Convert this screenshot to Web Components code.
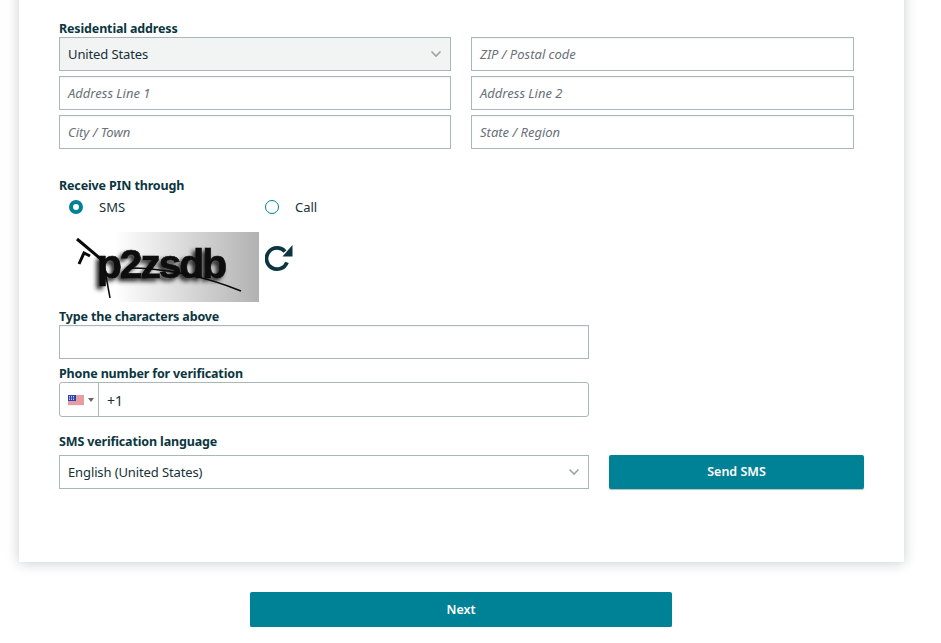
<!DOCTYPE html>
<html>
<head>
<meta charset="utf-8">
<title>Residential address</title>
<style>
html, body {
    background-color: #fff;
    color: #0b3640;
    font-family: 'Noto Sans', sans-serif;
    font-size: 13px;
    margin: 0;
    overflow: hidden;
}
</style>
</head>
<body>
<signup-page>
    <form-card>
        <address-section></address-section>
        <pin-section></pin-section>
    </form-card>
    <primary-button class="next">Next</primary-button>
</signup-page>

<script>
// Every box in the form has the same border and height
const boxStyles = `
:host {
    box-sizing: border-box;
    display: flex;
    height: 34px;
}

.box {
    align-items: center;
    border: solid 1px #aab7b8;
    box-shadow: inset 0 1px 1px rgba(0, 0, 0, .05);
    box-sizing: border-box;
    display: flex;
    height: 100%;
    padding: 0 8px;
    width: 100%;
}
`;

class FormField extends HTMLElement {
    constructor() {
        super();
        this.attachShadow({mode: 'open'});
        this.shadowRoot.innerHTML = `
        <style>
        ${boxStyles}
        .box {
            color: #687078;
            font-style: italic;
        }
        </style>
        <div class='box'><slot></slot></div>
        `;
    }
}
customElements.define('form-field', FormField);

class FormSelect extends HTMLElement {
    constructor() {
        super();
        this.attachShadow({mode: 'open'});
        this.shadowRoot.innerHTML = `
        <style>
        ${boxStyles}
        .box {
            color: #16313a;
            justify-content: space-between;
            letter-spacing: -.12px;
            box-shadow: none;
        }
        :host([filled]) .box {
            background-color: #f2f3f3;
        }
        svg {
            height: 8px;
            width: 12px;
        }
        </style>
        <div class='box'>
            <span><slot></slot></span>
            <svg viewBox='0 0 12 8'><path d='M1.5 1.5l4.5 4.5 4.5-4.5' fill='none' stroke='#98a5a6' stroke-width='1.6'/></svg>
        </div>
        `;
    }
}
customElements.define('form-select', FormSelect);

class FormLabel extends HTMLElement {
    constructor() {
        super();
        this.attachShadow({mode: 'open'});
        this.shadowRoot.innerHTML = `
        <style>
        :host {
            color: #0b3640;
            display: block;
            font-size: 12.5px;
            font-weight: 700;
            height: 15px;
            letter-spacing: -.15px;
            line-height: 16px;
            padding-top: 1px;
        }
        </style>
        <slot></slot>
        `;
    }
}
customElements.define('form-label', FormLabel);

class RadioOption extends HTMLElement {
    constructor() {
        super();
        this.attachShadow({mode: 'open'});
        this.shadowRoot.innerHTML = `
        <style>
        :host {
            align-items: center;
            color: #16313a;
            column-gap: 16px;
            display: flex;
            width: 196px;
        }
        .dot {
            border: solid 1px #008296;
            border-radius: 50%;
            box-sizing: border-box;
            height: 14px;
            width: 14px;
        }
        :host([checked]) .dot {
            border: solid 4px #008296;
        }
        </style>
        <span class='dot'></span>
        <slot></slot>
        `;
    }
}
customElements.define('radio-option', RadioOption);

class PrimaryButton extends HTMLElement {
    constructor() {
        super();
        this.attachShadow({mode: 'open'});
        this.shadowRoot.innerHTML = `
        <style>
        :host {
            align-items: center;
            background-color: #008296;
            border-radius: 2px;
            box-shadow: 0 1px 1px rgba(0, 28, 36, .3);
            box-sizing: border-box;
            color: #fff;
            display: flex;
            font-size: 12.5px;
            font-weight: 600;
            height: 34px;
            justify-content: center;
            padding-bottom: 1px;
        }
        </style>
        <slot></slot>
        `;
    }
}
customElements.define('primary-button', PrimaryButton);

class CaptchaImage extends HTMLElement {
    constructor() {
        super();
        this.attachShadow({mode: 'open'});
        this.shadowRoot.innerHTML = `
        <style>
        :host {
            column-gap: 6px;
            display: flex;
        }
        svg.picture {
            display: block;
            height: 70px;
            width: 200px;
        }
        svg.reload {
            height: 28px;
            margin-top: 12px;
            width: 30px;
        }
        text {
            font-family: 'Liberation Sans', sans-serif;
            font-size: 41px;
            font-weight: 700;
            letter-spacing: -2.2px;
        }
        </style>
        <svg class='picture' viewBox='0 0 200 70'>
            <defs>
                <linearGradient id='fade' x1='0' x2='1' y1='0' y2='0'>
                    <stop offset='0.28' stop-color='#fff'/>
                    <stop offset='0.55' stop-color='#e2e2e2'/>
                    <stop offset='1' stop-color='#b2b2b2'/>
                </linearGradient>
                <filter id='soft' x='-10%' y='-30%' width='120%' height='160%'>
                    <feDropShadow dx='-3' dy='3' stdDeviation='2.2' flood-color='#222'/>
                </filter>
            </defs>
            <rect width='200' height='70' fill='url(#fade)'/>
            <text x='38' y='46' fill='#0a0a0a' stroke='#0a0a0a' stroke-width='.6' filter='url(#soft)'>p2zsdb</text>
            <g fill='none' stroke='#0a0a0a'>
                <path d='M18 7L43 28' stroke-width='3'/>
                <path d='M20 32L25 21L31 24' stroke-width='3'/>
                <path d='M45 33L51 66' stroke-width='1.5'/>
                <path d='M68 36C110 36 145 44 182 59' stroke-width='1.5'/>
            </g>
        </svg>
        <svg class='reload' viewBox='0 0 30 28'>
            <path d='M20 7.5A10.6 10.6 0 1 0 22 18.3' fill='none' stroke='#0b3640' stroke-width='3.8'/>
            <path d='M27.5 1V12.5H17.5Z' fill='#0b3640'/>
        </svg>
        `;
    }
}
customElements.define('captcha-image', CaptchaImage);

class PhoneField extends HTMLElement {
    constructor() {
        super();
        this.attachShadow({mode: 'open'});
        this.shadowRoot.innerHTML = `
        <style>
        :host {
            border: solid 1px #aab7b8;
            border-radius: 3px;
            box-sizing: border-box;
            display: flex;
            height: 35px;
        }
        .country {
            align-items: center;
            border-right: solid 1px #aab7b8;
            box-sizing: border-box;
            column-gap: 4px;
            display: flex;
            padding-left: 8px;
            width: 39px;
        }
        .country svg {
            margin-top: 2px;
        }
        .caret {
            border-left: solid 3px transparent;
            border-right: solid 3px transparent;
            border-top: solid 4px #666;
            height: 0;
            width: 0;
        }
        .value {
            align-items: center;
            color: #16313a;
            display: flex;
            font-size: 14px;
            padding: 1px 0 0 8px;
        }
        </style>
        <div class='country'>
            <svg width='16' height='11' viewBox='0 0 16 11'>
                <rect width='16' height='11' fill='#f4f4f4'/>
                <path d='M0 1h16M0 3h16M0 5h16M0 7h16M0 9h16' stroke='#d8454f' stroke-width='1'/>
                <rect width='8' height='6' fill='#2f45b0'/>
                <path d='M1 1.5h6M1 3h6M1 4.5h6' stroke='#e6e9f8' stroke-width='.8' stroke-dasharray='1 1'/>
            </svg>
            <span class='caret'></span>
        </div>
        <div class='value'><slot></slot></div>
        `;
    }
}
customElements.define('phone-field', PhoneField);

class AddressSection extends HTMLElement {
    constructor() {
        super();
        this.attachShadow({mode: 'open'});
        this.shadowRoot.innerHTML = `
        <style>
        :host {
            display: block;
        }
        .grid {
            display: grid;
            gap: 5px 20px;
            grid-template-columns: 392px 383px;
            margin-top: 1px;
        }
        </style>
        <form-label>Residential address</form-label>
        <div class='grid'>
            <form-select filled>United States</form-select>
            <form-field>ZIP / Postal code</form-field>
            <form-field>Address Line 1</form-field>
            <form-field>Address Line 2</form-field>
            <form-field>City / Town</form-field>
            <form-field>State / Region</form-field>
        </div>
        `;
    }
}
customElements.define('address-section', AddressSection);

class PinSection extends HTMLElement {
    constructor() {
        super();
        this.attachShadow({mode: 'open'});
        this.shadowRoot.innerHTML = `
        <style>
        :host {
            display: block;
            margin-top: 28px;
        }
        .radios {
            display: flex;
            margin: 5px 0 0 10px;
        }
        captcha-image {
            margin-top: 16px;
        }
        .narrow {
            width: 530px;
        }
        .typed {
            margin-top: 6px;
        }
        .typed form-field {
            margin-top: 1px;
        }
        .phone {
            margin-top: 6px;
        }
        .phone phone-field {
            margin-top: 1px;
        }
        .language {
            margin-top: 16px;
        }
        .row {
            column-gap: 20px;
            display: flex;
            margin-top: 6px;
        }
        .row form-select {
            width: 530px;
        }
        .row primary-button {
            width: 255px;
        }
        </style>
        <form-label>Receive PIN through</form-label>
        <div class='radios'>
            <radio-option checked>SMS</radio-option>
            <radio-option>Call</radio-option>
        </div>
        <captcha-image></captcha-image>
        <div class='narrow typed'>
            <form-label>Type the characters above</form-label>
            <form-field></form-field>
        </div>
        <div class='narrow phone'>
            <form-label>Phone number for verification</form-label>
            <phone-field>+1</phone-field>
        </div>
        <form-label class='language'>SMS verification language</form-label>
        <div class='row'>
            <form-select>English (United States)</form-select>
            <primary-button>Send SMS</primary-button>
        </div>
        `;
    }
}
customElements.define('pin-section', PinSection);

class FormCard extends HTMLElement {
    constructor() {
        super();
        this.attachShadow({mode: 'open'});
        this.shadowRoot.innerHTML = `
        <style>
        :host {
            background-color: #fff;
            box-shadow: 0 1px 12px rgba(0, 28, 36, .22);
            box-sizing: border-box;
            display: block;
            height: 602px;
            margin: -40px 0 0 19px;
            padding: 60px 40px 0;
            width: 885px;
        }
        </style>
        <slot></slot>
        `;
    }
}
customElements.define('form-card', FormCard);

class SignupPage extends HTMLElement {
    constructor() {
        super();
        this.attachShadow({mode: 'open'});
        this.shadowRoot.innerHTML = `
        <style>
        :host {
            display: block;
        }
        ::slotted(primary-button) {
            height: 35px;
            margin: 30px 0 0 250px;
            width: 422px;
        }
        </style>
        <slot></slot>
        `;
    }
}
customElements.define('signup-page', SignupPage);
</script>
</body>
</html>
